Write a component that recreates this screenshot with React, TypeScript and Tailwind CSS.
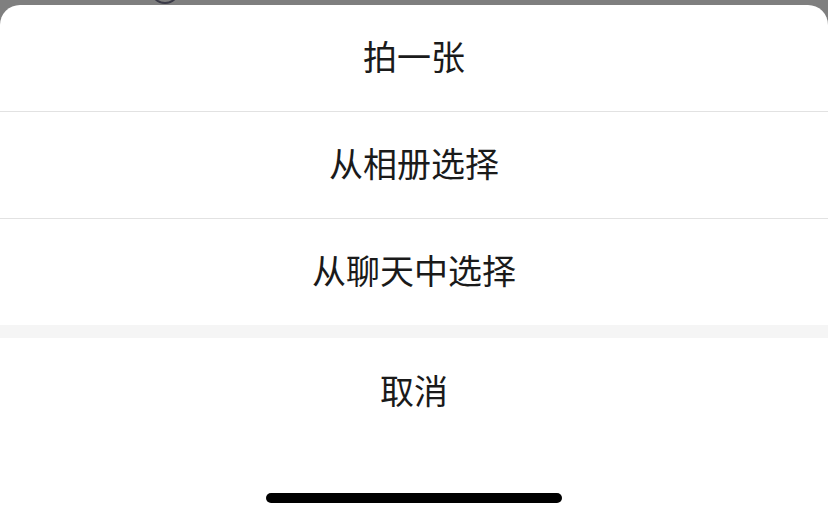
import React from "react";

const options = ["拍一张", "从相册选择", "从聊天中选择"];

export default function App() {
  return (
    <div
      className="w-[828px] h-[519px] bg-[#7f7f7f] flex flex-col overflow-hidden"
      style={{ fontFamily: '"Noto Sans CJK SC", "Noto Sans", sans-serif' }}
    >
      {/* Backdrop strip */}
      <div className="relative h-[5px] shrink-0">
        <div className="absolute left-[150px] top-[-26px] w-[30px] h-[30px] rounded-full border-2 border-[#3b3b48]" />
      </div>

      {/* Action sheet */}
      <div className="flex-1 bg-white rounded-t-[20px] flex flex-col">
        {options.map((label, i) => (
          <div
            key={label}
            className={
              "flex items-center justify-center pb-[6px] text-[34px] text-[#1a1a1a] " +
              (i < options.length - 1 ? "border-b border-[#e2e2e2] h-[107px]" : "h-[106px]")
            }
          >
            {label}
          </div>
        ))}
        <div className="h-[13px] bg-[#f5f5f5]" />
        <div className="h-[108px] flex items-center justify-center pb-[6px] text-[34px] text-[#1a1a1a]">
          取消
        </div>
        <div className="flex-1 flex justify-center pt-[47px]">
          <div className="w-[296px] h-[10px] rounded-full bg-black" />
        </div>
      </div>
    </div>
  );
}
